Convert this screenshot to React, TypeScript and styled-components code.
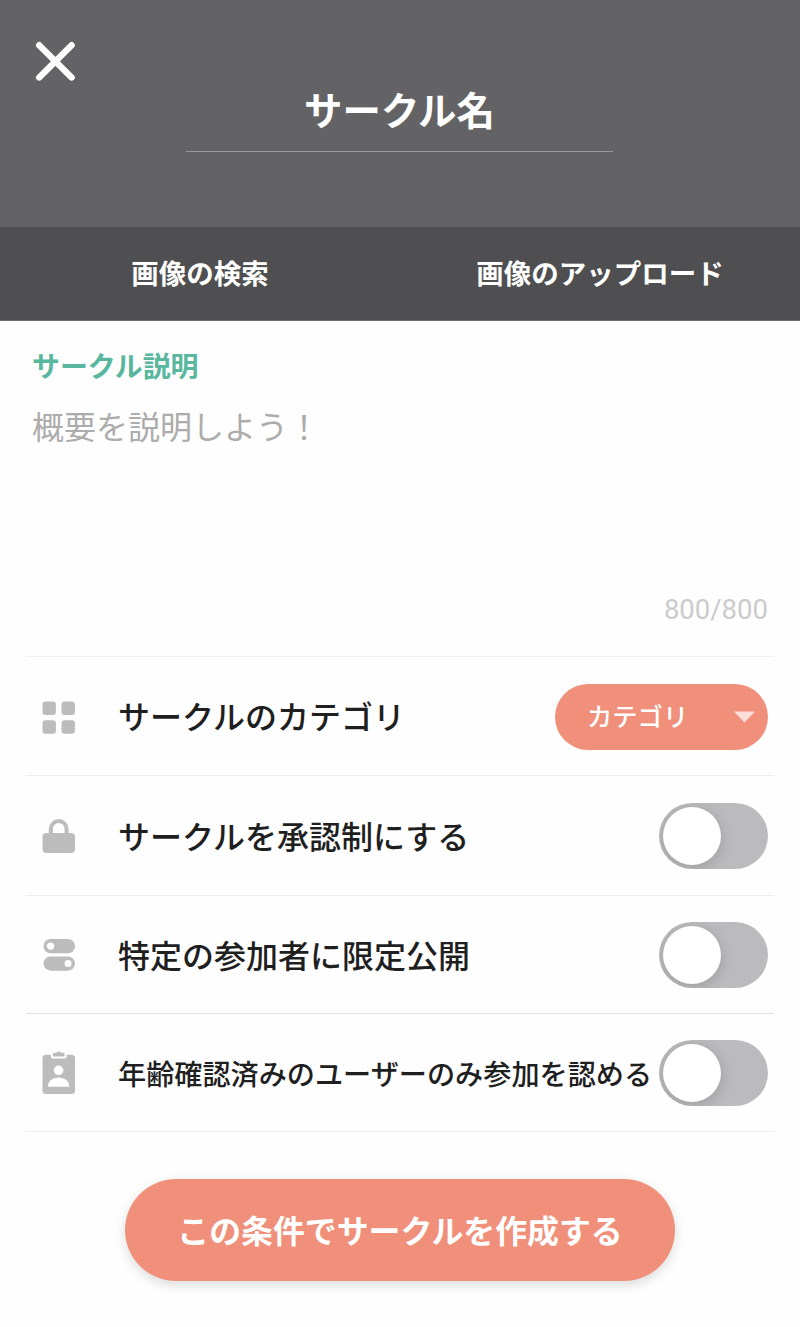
import React from 'react';
import styled, { createGlobalStyle } from 'styled-components';

const GlobalStyle = createGlobalStyle`
  * { box-sizing: border-box; }
  body {
    margin: 0;
    background: #fefefe;
    font-family: "Noto Sans CJK JP", sans-serif;
    color: #1f1f1f;
  }
  button { font-family: inherit; border: 0; padding: 0; margin: 0; background: none; }
`;

const Page = styled.main`
  width: 800px;
  height: 1327px;
  display: flex;
  flex-direction: column;
  overflow: hidden;
`;

const Cover = styled.header`
  height: 227px;
  flex: none;
  background: #636365;
  padding: 41px 36px 0 35px;
  display: grid;
  grid-template-columns: 41px 1fr 41px;
  align-items: start;
`;

const CloseButton = styled.button`
  width: 41px;
  height: 41px;
  display: flex;
`;

const TitleField = styled.div`
  justify-self: center;
  width: 427px;
  height: 111px;
  padding-top: 38px;
  border-bottom: 1px solid #99999b;
  color: #fff;
  font-size: 38.4px;
  line-height: 58px;
  font-weight: 700;
  text-align: center;
  white-space: nowrap;
`;

const ImageTabs = styled.nav`
  height: 94px;
  flex: none;
  display: grid;
  grid-template-columns: 1fr 1fr;
  background: #4f4f51;
  border-bottom: 1px solid #6c6c6e;
`;

const ImageTab = styled.button`
  color: #fff;
  font-size: 27.5px;
  font-weight: 700;
  line-height: 40px;
  padding-bottom: 3px;
`;

const Description = styled.section`
  height: 335px;
  flex: none;
  padding: 24px 32px 0;
  display: flex;
  flex-direction: column;
`;

const DescriptionTitle = styled.h2`
  margin: 0;
  color: #58b79e;
  font-size: 27.9px;
  line-height: 40px;
  font-weight: 700;
`;

const Placeholder = styled.p`
  margin: 16px 0 0;
  color: #acacac;
  font-size: 32px;
  line-height: 48px;
`;

const Counter = styled.span`
  margin: auto 0 29px;
  align-self: flex-end;
  color: #cbcbcb;
  font-family: Roboto, sans-serif;
  font-size: 27.5px;
  line-height: 34px;
  font-weight: 400;
`;

const Settings = styled.section`
  margin: 0 26px;
  flex: none;
  border-top: 1px solid #f0f0f0;
`;

const Row = styled.div<{ $height: number; $divider?: string }>`
  height: ${(p) => p.$height}px;
  display: flex;
  align-items: center;
  padding: 1px 6px 0 16px;
  border-bottom: 1px solid ${(p) => p.$divider ?? '#eeeeee'};
`;

const IconSlot = styled.span`
  width: 34px;
  height: 46px;
  flex: none;
  color: #bcbcbc;
  svg { display: block; }
`;

const RowLabel = styled.span<{ $small?: boolean }>`
  flex: 1;
  margin-left: 42px;
  padding-bottom: ${(p) => (p.$small ? 0 : 3)}px;
  white-space: nowrap;
  font-size: ${(p) => (p.$small ? 28.15 : 32)}px;
  line-height: 48px;
  font-weight: 500;
`;

const CategorySelect = styled.button`
  width: 213px;
  height: 66px;
  flex: none;
  border-radius: 33px;
  background: #f0907a;
  color: #fff;
  display: flex;
  align-items: center;
  justify-content: space-between;
  padding: 0 13px 0 32px;
  font-size: 25.3px;
  font-weight: 500;
`;

const CategoryText = styled.span`
  padding-bottom: 3px;
`;

const Switch = styled.span`
  width: 109px;
  height: 66px;
  flex: none;
  padding: 4px;
  border-radius: 33px;
  background: #bbbbbd;
  overflow: hidden;
`;

const Knob = styled.span`
  display: block;
  width: 58px;
  height: 58px;
  border-radius: 50%;
  background: #fff;
  box-shadow: 0 3px 14px rgba(0, 0, 0, 0.17);
`;

const SubmitButton = styled.button`
  align-self: center;
  flex: none;
  width: 550px;
  height: 102px;
  margin-top: 47px;
  padding-bottom: 2px;
  border-radius: 51px;
  background: #f0907a;
  color: #fff;
  font-size: 31.9px;
  font-weight: 700;
  line-height: 48px;
  box-shadow: 0 4px 12px rgba(0, 0, 0, 0.14);
`;

const CloseIcon = () => (
  <svg width="41" height="41" viewBox="0 0 41 41" fill="none" stroke="#fff" strokeWidth="6.4" strokeLinecap="round">
    <path d="M4.2 4.2 36.6 36.4M36.6 4.2 4.2 36.4" />
  </svg>
);

const GridIcon = () => (
  <svg width="34" height="46" viewBox="0 0 34 46" fill="currentColor">
    <rect x="0.5" y="7.5" width="13.4" height="13.4" rx="3" />
    <rect x="19.5" y="7.5" width="13.4" height="13.4" rx="3" />
    <rect x="0.5" y="26.3" width="13.4" height="13.4" rx="3" />
    <rect x="19.5" y="26.3" width="13.4" height="13.4" rx="3" />
  </svg>
);

const LockIcon = () => (
  <svg width="34" height="46" viewBox="0 0 34 46" fill="currentColor">
    <rect x="0.5" y="20" width="32.5" height="20" rx="4" />
    <path d="M8.8 22v-6a7.9 7.9 0 0 1 15.8 0v6" fill="none" stroke="currentColor" strokeWidth="4" />
  </svg>
);

const TogglesIcon = () => (
  <svg width="34" height="46" viewBox="0 0 34 46">
    <rect x="1.5" y="7" width="31.5" height="14.3" rx="7.15" fill="currentColor" />
    <rect x="1.5" y="24.4" width="31.5" height="14.3" rx="7.15" fill="currentColor" />
    <circle cx="8.6" cy="14.1" r="3.7" fill="#fff" />
    <circle cx="26.1" cy="31.5" r="3.5" fill="#fff" />
  </svg>
);

const BadgeIcon = () => (
  <svg width="34" height="46" viewBox="0 0 34 46">
    <rect x="0.5" y="4.8" width="32.5" height="39.2" rx="3.5" fill="currentColor" />
    <path d="M8.8 4v2.2q0 2.4 2.4 2.4h11.2q2.4 0 2.4-2.4V4z" fill="#fefefe" />
    <path d="M12.4 2.8h2.4a2.2 2.2 0 0 1 4 0h2.4q1.4 0 1.4 1.4v.7q0 1.5-1.5 1.5h-8.8q-1.5 0-1.5-1.5v-.7q0-1.4 1.6-1.4z" fill="currentColor" />
    <circle cx="16.6" cy="20.3" r="4.8" fill="#fefefe" />
    <path d="M5.9 36.7c0-5.7 4.7-9.2 10.7-9.2s10.7 3.5 10.7 9.2z" fill="#fefefe" />
  </svg>
);

const CaretIcon = () => (
  <svg width="21" height="12" viewBox="0 0 21 12">
    <path d="M0 .5h21L10.5 11.5z" fill="#fff" fillOpacity="0.7" />
  </svg>
);

const Toggle = () => (
  <Switch role="switch" aria-checked="false">
    <Knob />
  </Switch>
);

export default function App() {
  return (
    <>
      <GlobalStyle />
      <Page>
        <Cover>
          <CloseButton><CloseIcon /></CloseButton>
          <TitleField>サークル名</TitleField>
        </Cover>
        <ImageTabs>
          <ImageTab>画像の検索</ImageTab>
          <ImageTab>画像のアップロード</ImageTab>
        </ImageTabs>
        <Description>
          <DescriptionTitle>サークル説明</DescriptionTitle>
          <Placeholder>概要を説明しよう！</Placeholder>
          <Counter>800/800</Counter>
        </Description>
        <Settings>
          <Row $height={119}>
            <IconSlot><GridIcon /></IconSlot>
            <RowLabel>サークルのカテゴリ</RowLabel>
            <CategorySelect><CategoryText>カテゴリ</CategoryText><CaretIcon /></CategorySelect>
          </Row>
          <Row $height={120}>
            <IconSlot><LockIcon /></IconSlot>
            <RowLabel>サークルを承認制にする</RowLabel>
            <Toggle />
          </Row>
          <Row $height={118} $divider="#e2e2e2">
            <IconSlot><TogglesIcon /></IconSlot>
            <RowLabel>特定の参加者に限定公開</RowLabel>
            <Toggle />
          </Row>
          <Row $height={118}>
            <IconSlot><BadgeIcon /></IconSlot>
            <RowLabel $small>年齢確認済みのユーザーのみ参加を認める</RowLabel>
            <Toggle />
          </Row>
        </Settings>
        <SubmitButton>この条件でサークルを作成する</SubmitButton>
      </Page>
    </>
  );
}
